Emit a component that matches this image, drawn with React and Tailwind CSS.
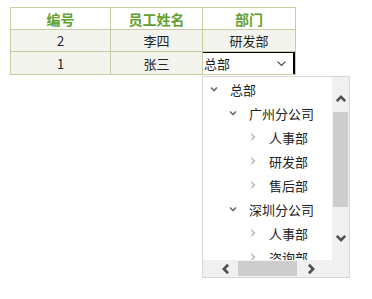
import React from 'react';

const rows = [
  { id: 2, name: '李四', dept: '研发部' },
  { id: 1, name: '张三', dept: '总部', editing: true },
];

const tree = [
  { label: '总部', level: 0, open: true },
  { label: '广州分公司', level: 1, open: true },
  { label: '人事部', level: 2 },
  { label: '研发部', level: 2 },
  { label: '售后部', level: 2 },
  { label: '深圳分公司', level: 1, open: true },
  { label: '人事部', level: 2 },
  { label: '咨询部', level: 2 },
];

const indent = ['pl-[6px]', 'pl-[25px]', 'pl-[45px]'];

function Chevron({ dir = 'down', className = '', size = 10, stroke = 1.6 }) {
  const d = {
    down: 'M2 3.5 L5 6.5 L8 3.5',
    right: 'M3.5 2 L6.5 5 L3.5 8',
    up: 'M2 6.5 L5 3.5 L8 6.5',
    left: 'M6.5 2 L3.5 5 L6.5 8',
  }[dir];
  return (
    <svg width={size} height={size} viewBox="0 0 10 10" className={className}>
      <path d={d} fill="none" stroke="currentColor" strokeWidth={stroke} />
    </svg>
  );
}

export default function App() {
  return (
    <div className="relative w-[372px] h-[299px] pt-[7px] pl-[10px] bg-white font-['Noto_Sans_CJK_SC','Noto_Sans',sans-serif] text-[#222]">
      <table className="border-collapse table-fixed text-[13px]">
        <thead>
          <tr className="h-[22px] bg-white">
            <th className="w-[100px] border border-[#c8cba4] p-0 text-[14px] font-bold text-[#62a030] leading-none">编号</th>
            <th className="w-[92px] border border-[#c8cba4] p-0 text-[14px] font-bold text-[#62a030] leading-none">员工姓名</th>
            <th className="w-[93px] border border-[#c8cba4] p-0 text-[14px] font-bold text-[#62a030] leading-none">部门</th>
          </tr>
        </thead>
        <tbody>
          {rows.map((r) => (
            <tr key={r.id} className="h-[22px] bg-[#f4f4ee]">
              <td className="border border-[#c8cba4] p-0 text-center leading-none">{r.id}</td>
              <td className="border border-[#c8cba4] p-0 text-center leading-none">{r.name}</td>
              {r.editing ? (
                <td className="border border-[#c8cba4] p-0 h-[22px] bg-white">
                  <div className="flex items-center justify-between h-[22px] -ml-px border-l border-t border-r-2 border-black pl-[1px] pr-[5px] leading-none">
                    <span>{r.dept}</span>
                    <Chevron dir="down" size={13} stroke={0.9} className="text-[#444]" />
                  </div>
                </td>
              ) : (
                <td className="border border-[#c8cba4] p-0 text-center leading-none">{r.dept}</td>
              )}
            </tr>
          ))}
        </tbody>
      </table>

      {/* dropdown tree */}
      <div className="absolute left-[202px] top-[76px] w-[148px] h-[202px] border border-[#d6d6d6] bg-white flex flex-col text-[13px]">
        <div className="flex h-[183px]">
          <div className="flex-1 overflow-hidden">
            {tree.map((n, i) => (
              <div key={i} className={`flex items-center h-[24px] shrink-0 ${indent[n.level]}`}>
                {n.open ? (
                  <Chevron dir="down" size={10} stroke={1.6} className="text-[#6a6a6a]" />
                ) : (
                  <Chevron dir="right" size={10} stroke={1.3} className="text-[#b0b0b0]" />
                )}
                <span className="ml-[11px] leading-none whitespace-nowrap">{n.label}</span>
              </div>
            ))}
          </div>
          <div className="w-[17px] bg-[#f0f0f0] flex flex-col">
            <div className="h-[35px] flex items-end justify-center pb-[6px]">
              <Chevron dir="up" size={14} stroke={1.9} className="text-[#505050]" />
            </div>
            <div className="h-[95px] mx-[1px] bg-[#cdcdcd]" />
            <div className="flex-1" />
            <div className="h-[35px] flex items-start justify-center pt-[6px]">
              <Chevron dir="down" size={14} stroke={1.9} className="text-[#505050]" />
            </div>
          </div>
        </div>
        <div className="h-[17px] flex bg-[#f0f0f0]">
          <div className="w-[35px] flex items-center justify-end pr-[5px]">
            <Chevron dir="left" size={14} stroke={1.9} className="text-[#505050]" />
          </div>
          <div className="w-[59px] my-[1px] bg-[#cdcdcd]" />
          <div className="w-[35px] flex items-center justify-start pl-[7px]">
            <Chevron dir="right" size={14} stroke={1.9} className="text-[#505050]" />
          </div>
          <div className="flex-1" />
        </div>
      </div>
    </div>
  );
}
